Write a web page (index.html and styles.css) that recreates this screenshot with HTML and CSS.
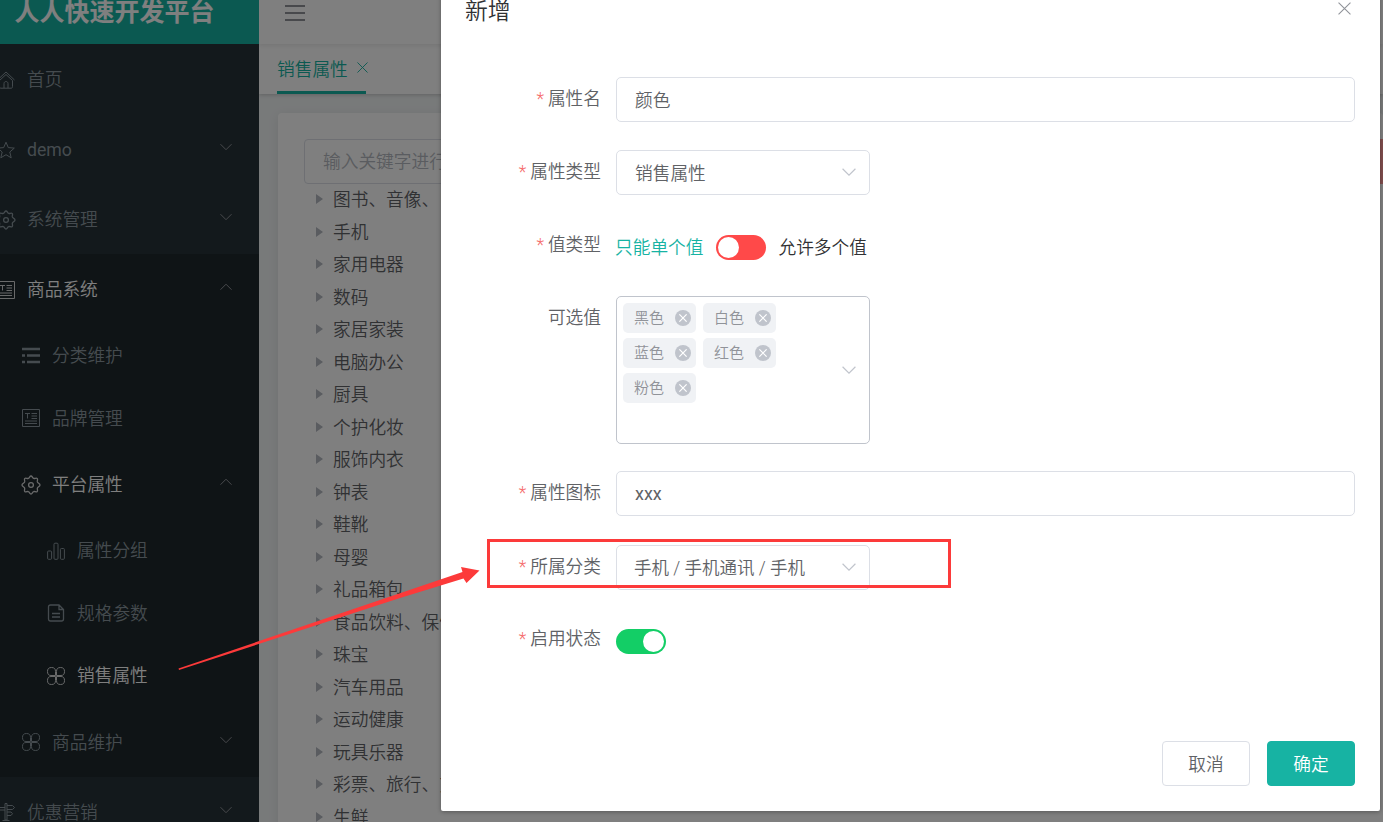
FILE: index.html
```html
<!DOCTYPE html>
<html lang="zh-CN">
<head>
    <meta charset="UTF-8">
    <meta name="viewport" content="width=device-width, initial-scale=1.0">
    <title>人人快速开发平台</title>
    <link rel="stylesheet" href="styles.css">
</head>
<body>
    <!-- icons -->
    <svg class="sprite">
        <symbol id="down" viewBox="0 0 12 12"><path d="M.5 3.2 6 8.7l5.500-5.500"/></symbol>
        <symbol id="up" viewBox="0 0 12 12"><path d="M.5 8.700 6 3.200l5.500 5.500"/></symbol>
        <symbol id="close" viewBox="0 0 12 12"><path d="m.5.5 11 11M11.500.5l-11 11"/></symbol>
        <symbol id="home" viewBox="0 0 18 18"><path d="M.5 9 9 1l8.500 8M2.500 9.500v6.200c0 1 .5 1.500 1.500 1.500h10c1 0 1.500-.5 1.500-1.500V9.500M1 6.500V3M7 17v-4.500c0-2.600 4-2.600 4 0V17M2.500 9.500 9 3.500l6.500 6"/></symbol>
        <symbol id="star" viewBox="0 0 18 18"><path d="m9 1.200 2.300 5.400 6 .5-4.500 3.900 1.400 5.800L9 13.700l-5.200 3.100L5.200 11 .7 7.100l6-.5z"/></symbol>
        <symbol id="gear" viewBox="0 0 20 20"><path stroke-width="1.300" d="M10 1c1.300 0 1.400 2 2.600 2.400 1.200.5 2.600-.9 3.600 0 1 1-.3 2.400.2 3.700.5 1.200 2.600 1.400 2.600 2.900s-2.100 1.700-2.600 2.900c-.5 1.300.8 2.700-.2 3.700s-2.400-.5-3.600 0C11.400 17 11.300 19 10 19s-1.400-2-2.600-2.400c-1.200-.5-2.600 1-3.600 0s.3-2.400-.2-3.700C3.100 11.700 1 11.500 1 10s2.100-1.700 2.600-2.900c.5-1.300-.8-2.700.2-3.700 1-.9 2.400.5 3.600 0C8.600 3 8.700 1 10 1z"/><circle cx="10" cy="10" r="2.400" stroke-width="1.300"/></symbol>
        <symbol id="news" viewBox="0 0 18 18"><path d="M.5.5h17v17H.5zM3 4.500h5M5.500 4.500v5M9.500 4.500H15M9.500 7H15M9.500 9.500H15M3 12h12M3 14.500h12"/></symbol>
        <symbol id="list" viewBox="0 0 18 18"><path d="M0 2h18M0 8.500h3M5 8.500h13M0 15h3M5 15h13" stroke-width="2.400"/></symbol>
        <symbol id="bars" viewBox="0 0 18 18"><rect x=".6" y="9" width="4" height="8.300" rx="1"/><rect x="7" y="1.200" width="4" height="16.100" rx="1"/><rect x="13.400" y="6.500" width="4" height="10.800" rx="1"/></symbol>
        <symbol id="doc" viewBox="0 0 18 18"><path stroke-width="1.300" d="M3.500 1H12l4.500 4.500V15c0 1.300-.7 2-2 2h-11c-1.300 0-2-.7-2-2V3c0-1.300.7-2 2-2zM12 1v4.500h4.500M5 9.500h8M5 13h8"/></symbol>
        <symbol id="clover" viewBox="0 0 18 18"><path d="M8.500 8.500H4C1.500 8.500.5 7 .5 4.500S1.500.5 4.500.5s4 1.500 4 4zM9.500 8.500H14c2.500 0 3.500-1.500 3.500-4s-1-4-4-4-4 1.500-4 4zM8.500 9.500H4c-2.500 0-3.500 1.500-3.500 4s1 4 4 4 4-1.500 4-4zM9.500 9.500H14c2.500 0 3.500 1.500 3.500 4s-1 4-4 4-4-1.500-4-4z"/></symbol>
        <symbol id="sign" viewBox="0 0 18 18"><path d="M8 .5h2V17H8zM10 2.500h5.500L17.500 4.500l-2 2H10M8 4.500H1M8 7H3M10 9h4l1.500 1.700-1.500 1.800h-4M5.500 17.500h7"/></symbol>
    </svg>

    <div class="app">
        <aside class="sidebar">
            <h1 class="brand">人人快速开发平台</h1>
            <ul class="menu">
                <li class="menu-item"><svg class="icon"><use href="#home"/></svg><span>首页</span></li>
                <li class="menu-item"><svg class="icon"><use href="#star"/></svg><span class="latin">demo</span><svg class="arrow"><use href="#down"/></svg></li>
                <li class="menu-item"><svg class="icon gear"><use href="#gear"/></svg><span>系统管理</span><svg class="arrow"><use href="#down"/></svg></li>
            </ul>
            <ul class="menu opened">
                <li class="menu-item active"><svg class="icon"><use href="#news"/></svg><span>商品系统</span><svg class="arrow"><use href="#up"/></svg></li>
                <li class="menu-item level2 leaf"><svg class="icon"><use href="#list"/></svg><span>分类维护</span></li>
                <li class="menu-item level2 leaf"><svg class="icon"><use href="#news"/></svg><span>品牌管理</span></li>
                <li class="menu-item level2 active"><svg class="icon gear"><use href="#gear"/></svg><span>平台属性</span><svg class="arrow"><use href="#up"/></svg></li>
                <li class="menu-item level3 leaf"><svg class="icon"><use href="#bars"/></svg><span>属性分组</span></li>
                <li class="menu-item level3 leaf"><svg class="icon"><use href="#doc"/></svg><span>规格参数</span></li>
                <li class="menu-item level3 leaf active"><svg class="icon"><use href="#clover"/></svg><span>销售属性</span></li>
                <li class="menu-item level2"><svg class="icon"><use href="#clover"/></svg><span>商品维护</span><svg class="arrow"><use href="#down"/></svg></li>
            </ul>
            <ul class="menu">
                <li class="menu-item"><svg class="icon"><use href="#sign"/></svg><span>优惠营销</span><svg class="arrow"><use href="#down"/></svg></li>
            </ul>
        </aside>

        <main class="main">
            <nav class="navbar">
                <div class="burger"><i></i><i></i><i></i></div>
            </nav>
            <div class="tabs">
                <div class="tab">销售属性<svg class="tab-close"><use href="#close"/></svg></div>
            </div>
            <div class="card">
                <div class="toolbar">
                    <input class="filter" type="text" placeholder="输入关键字进行过滤">
                    <div class="danger-button"></div>
                </div>
                <ul class="tree">
                    <li>图书、音像、电子书刊</li>
                    <li>手机</li>
                    <li>家用电器</li>
                    <li>数码</li>
                    <li>家居家装</li>
                    <li>电脑办公</li>
                    <li>厨具</li>
                    <li>个护化妆</li>
                    <li>服饰内衣</li>
                    <li>钟表</li>
                    <li>鞋靴</li>
                    <li>母婴</li>
                    <li>礼品箱包</li>
                    <li>食品饮料、保健食品</li>
                    <li>珠宝</li>
                    <li>汽车用品</li>
                    <li>运动健康</li>
                    <li>玩具乐器</li>
                    <li>彩票、旅行、充值、票务</li>
                    <li>生鲜</li>
                </ul>
            </div>
        </main>
    </div>

    <div class="overlay"></div>

    <div class="dialog">
        <header class="dialog-header">
            <span>新增</span>
            <svg class="dialog-close"><use href="#close"/></svg>
        </header>
        <form class="form">
            <div class="form-item">
                <label class="label required">属性名</label>
                <div class="control">颜色</div>
            </div>
            <div class="form-item">
                <label class="label required">属性类型</label>
                <div class="control select">销售属性<svg class="caret"><use href="#down"/></svg></div>
            </div>
            <div class="form-item">
                <label class="label required">值类型</label>
                <div class="switch-row">
                    <span class="switch-text on">只能单个值</span>
                    <span class="switch red"></span>
                    <span class="switch-text">允许多个值</span>
                </div>
            </div>
            <div class="form-item values">
                <label class="label">可选值</label>
                <div class="control select multiple">
                    <div class="tags">
                        <span class="tag">黑色<i><svg><use href="#close"/></svg></i></span>
                        <span class="tag">白色<i><svg><use href="#close"/></svg></i></span>
                        <span class="tag">蓝色<i><svg><use href="#close"/></svg></i></span>
                        <span class="tag">红色<i><svg><use href="#close"/></svg></i></span>
                        <span class="tag">粉色<i><svg><use href="#close"/></svg></i></span>
                    </div>
                    <svg class="caret"><use href="#down"/></svg>
                </div>
            </div>
            <div class="form-item">
                <label class="label required">属性图标</label>
                <div class="control latin-value">xxx</div>
            </div>
            <div class="form-item category">
                <label class="label required">所属分类</label>
                <div class="control select cascader">手机 / 手机通讯 / 手机<svg class="caret"><use href="#down"/></svg></div>
            </div>
            <div class="form-item">
                <label class="label required">启用状态</label>
                <div class="switch-row"><span class="switch green"></span></div>
            </div>
        </form>
        <footer class="dialog-footer">
            <button class="button">取消</button>
            <button class="button primary">确定</button>
        </footer>
    </div>

    <!-- highlight box and arrow -->
    <div class="highlight"></div>
    <svg class="pointer" viewBox="0 0 1383 822"><path d="M178.500 668.500 462.500 572l-1.500-5L479.500 570.500 466.500 583l-3-4.500L400 598 179 670z"/></svg>
</body>
</html>
```

FILE: styles.css
```css
* {
    box-sizing: border-box;
}
body {
    margin: 0;
    height: 822px;
    overflow: hidden;
    position: relative;
    font-family: Roboto, "Noto Sans CJK SC", sans-serif;
    font-size: 17.7px;
    font-weight: 350;
    color: #303133;
}
ul {
    list-style: none;
    margin: 0;
    padding: 0;
}
svg {
    fill: none;
    stroke: currentColor;
    flex: none;
}
.sprite {
    display: none;
}
.app {
    display: flex;
    margin: -18px 0 0 -28px;
    height: 840px;
}

/* sidebar */
.sidebar {
    width: 287px;
    flex: none;
    background-color: #263238;
    overflow: hidden;
}
.brand {
    margin: 0;
    height: 62px;
    line-height: 62px;
    padding-right: 2px;
    font-size: 25px;
    font-weight: bold;
    text-align: center;
    color: #fff;
    background-color: #17b3a3;
}
.menu-item {
    display: flex;
    align-items: center;
    height: 70px;
    padding: 0 27px 0 25px;
    color: #8a979e;
}
.menu-item span {
    padding-bottom: 2px;
}
.menu-item .latin {
    padding: 1px 0 0;
    font-weight: 400;
}
.leaf {
    height: 62.5px;
}
.level2 {
    padding-left: 50px;
}
.level3 {
    padding-left: 75px;
}
.active {
    color: #fff;
}
.opened {
    background-color: #1e282c;
}
.icon {
    width: 18px;
    height: 18px;
    margin: 1px 12px 0 0;
}
.gear {
    width: 20px;
    height: 20px;
    margin: 1px 11px 0 -1px;
}
.active .icon {
    opacity: .8;
}
.arrow {
    width: 12px;
    height: 12px;
    margin: -4px 0 0 auto;
    color: #909399;
}

/* page behind the dialog */
.main {
    flex: 1;
    background-color: #f1f4f5;
    overflow: hidden;
}
.navbar {
    display: flex;
    align-items: center;
    height: 62px;
    padding-left: 26px;
    background-color: #fff;
    box-shadow: 0 2px 4px rgba(0, 0, 0, .08);
    position: relative;
}
.burger {
    display: flex;
    flex-direction: column;
    gap: 5px;
}
.burger i {
    width: 20px;
    height: 2px;
    background-color: #909399;
}
.tabs {
    height: 50px;
    padding-left: 18px;
    background-color: #fff;
    box-shadow: 0 1px 4px rgba(0, 0, 0, .2);
}
.tab {
    display: flex;
    align-items: center;
    width: 89px;
    height: 50px;
    border-bottom: 3px solid #17b3a3;
    color: #17b3a3;
    white-space: nowrap;
}
.tab-close {
    width: 11px;
    height: 11px;
    margin-left: 9px;
}
.card {
    height: 760px;
    margin: 19px 0 0 19px;
    padding: 26px 0 0 26px;
    background-color: #fff;
    border-radius: 4px;
    box-shadow: 0 2px 12px rgba(0, 0, 0, .08);
}
.toolbar {
    display: flex;
    justify-content: space-between;
}
.filter {
    width: 250px;
    height: 45px;
    padding: 0 18px;
    border: 1px solid #dcdfe6;
    border-radius: 4px;
    font: inherit;
}
.filter::placeholder {
    color: #b4b8c0;
}
.danger-button {
    width: 60px;
    height: 45px;
    background-color: #ff9a9a;
}
.tree li {
    display: flex;
    align-items: center;
    height: 32.5px;
    padding: 0 0 4px 12px;
    color: #606266;
    white-space: nowrap;
}
.tree li::before {
    content: "";
    margin: 2px 10px 0 0;
    border: 5px solid transparent;
    border-left: 7px solid #b4b8c0;
    border-right: 0;
}
.overlay {
    position: absolute;
    inset: 0;
    background-color: rgba(0, 0, 0, .5);
}

/* dialog */
.dialog {
    position: absolute;
    left: 441px;
    top: -20px;
    width: 939px;
    height: 831px;
    display: flex;
    flex-direction: column;
    padding: 0 25px 25px 24px;
    background-color: #fff;
    border-radius: 2px;
    box-shadow: 0 1px 4px rgba(0, 0, 0, .3);
}
.dialog-header {
    display: flex;
    justify-content: space-between;
    height: 97px;
    padding-top: 14px;
    font-size: 22.8px;
    line-height: 36px;
}
.dialog-close {
    width: 13px;
    height: 13px;
    margin: 8px 4px 0 0;
    color: #909399;
}
.form {
    flex: 1;
}
.form-item {
    display: flex;
    height: 45px;
    margin-bottom: 28px;
}
.label {
    width: 136px;
    margin-right: 15px;
    line-height: 45px;
    text-align: right;
    color: #606266;
}
.required::before {
    content: "*";
    margin-right: 4px;
    color: #f56c6c;
}
.control {
    display: flex;
    align-items: center;
    flex: 1;
    height: 45px;
    padding: 0 13px 2px 18px;
    border: 1px solid #dcdfe6;
    border-radius: 5px;
    color: #606266;
}
.latin-value {
    padding-bottom: 0;
    font-size: 18px;
    font-weight: 400;
}
.select {
    flex: none;
    width: 254px;
    justify-content: space-between;
}
.cascader {
    padding-left: 17px;
    padding-bottom: 3px;
    font-size: 17.5px;
}
.caret {
    width: 14px;
    height: 14px;
    margin-top: 1px;
    color: #c0c4cc;
}
.form .values {
    height: 148px;
    margin-bottom: 27px;
}
.form .category {
    margin: 29px 0 27px;
}
.multiple {
    height: 148px;
    padding-left: 6px;
    border-color: #c0c4cc;
}
.tags {
    display: flex;
    flex-wrap: wrap;
    align-content: flex-start;
    gap: 5px 7px;
    width: 200px;
    height: 132px;
}
.tag {
    display: flex;
    align-items: center;
    justify-content: space-between;
    width: 73px;
    height: 30px;
    padding: 0 5px 0 11px;
    border-radius: 5px;
    background-color: #f0f2f5;
    color: #909399;
    font-size: 15px;
    line-height: 28px;
}
.tag i {
    display: flex;
    align-items: center;
    justify-content: center;
    width: 16px;
    height: 16px;
    border-radius: 50%;
    background-color: #c0c4cc;
    color: #fff;
}
.tag svg {
    width: 8px;
    height: 8px;
    stroke-width: 1.8;
}
.switch-row {
    display: flex;
    align-items: center;
    gap: 12px;
    height: 49px;
}
.switch-text {
    padding-bottom: 4px;
}
.on {
    margin: 0 1px 0 -1px;
    color: #17b3a3;
}
.switch {
    display: flex;
    width: 50px;
    height: 25px;
    padding: 2px;
    border-radius: 13px;
}
.switch::before {
    content: "";
    width: 21px;
    height: 21px;
    border-radius: 50%;
    background-color: #fff;
}
.red {
    background-color: #ff4949;
}
.green {
    justify-content: flex-end;
    background-color: #13ce66;
}
.dialog-footer {
    display: flex;
    justify-content: flex-end;
    gap: 17px;
}
.button {
    width: 88px;
    height: 45px;
    padding: 0 0 2px;
    border: 1px solid #dcdfe6;
    border-radius: 4px;
    background-color: #fff;
    color: #606266;
    font: inherit;
}
.primary {
    border-color: #17b3a3;
    background-color: #17b3a3;
    color: #fff;
}

.highlight {
    position: absolute;
    left: 487px;
    top: 539px;
    width: 464px;
    height: 49px;
    border: 3px solid #fc3a3a;
}
.pointer {
    position: absolute;
    left: 0;
    top: 0;
    width: 1383px;
    height: 822px;
    fill: #fc3a3a;
    stroke: none;
}
```
